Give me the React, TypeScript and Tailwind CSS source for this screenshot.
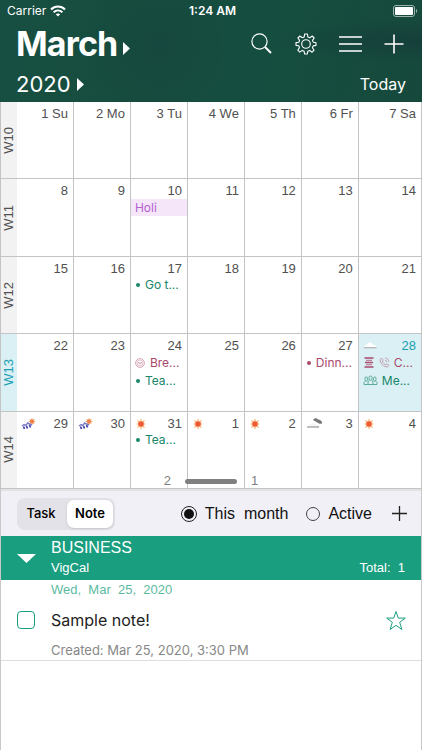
import React, { useState } from 'react';
import clsx from 'clsx';

type Weather = 'sun' | 'rain' | 'cloud' | 'wind';
type EventIcon = 'dot' | 'face' | 'list' | 'phone' | 'people';

interface CalendarEvent {
  title: string;
  icons?: EventIcon[];
  color: 'green' | 'rose' | 'purple';
}

interface Day {
  label: string;
  weather?: Weather;
  events?: CalendarEvent[];
  today?: boolean;
}

interface Week {
  name: string;
  current?: boolean;
  days: Day[];
}

const weeks: Week[] = [
  {
    name: 'W10',
    days: [
      { label: '1 Su' },
      { label: '2 Mo' },
      { label: '3 Tu' },
      { label: '4 We' },
      { label: '5 Th' },
      { label: '6 Fr' },
      { label: '7 Sa' },
    ],
  },
  {
    name: 'W11',
    days: [
      { label: '8' },
      { label: '9' },
      { label: '10', events: [{ title: 'Holi', color: 'purple' }] },
      { label: '11' },
      { label: '12' },
      { label: '13' },
      { label: '14' },
    ],
  },
  {
    name: 'W12',
    days: [
      { label: '15' },
      { label: '16' },
      { label: '17', events: [{ title: 'Go t...', icons: ['dot'], color: 'green' }] },
      { label: '18' },
      { label: '19' },
      { label: '20' },
      { label: '21' },
    ],
  },
  {
    name: 'W13',
    current: true,
    days: [
      { label: '22' },
      { label: '23' },
      {
        label: '24',
        events: [
          { title: 'Bre...', icons: ['face'], color: 'rose' },
          { title: 'Tea...', icons: ['dot'], color: 'green' },
        ],
      },
      { label: '25' },
      { label: '26' },
      { label: '27', events: [{ title: 'Dinn...', icons: ['dot'], color: 'rose' }] },
      {
        label: '28',
        today: true,
        weather: 'cloud',
        events: [
          { title: 'C...', icons: ['list', 'phone'], color: 'rose' },
          { title: 'Me...', icons: ['people'], color: 'green' },
        ],
      },
    ],
  },
  {
    name: 'W14',
    days: [
      { label: '29', weather: 'rain' },
      { label: '30', weather: 'rain' },
      { label: '31', weather: 'sun', events: [{ title: 'Tea...', icons: ['dot'], color: 'green' }] },
      { label: '1', weather: 'sun' },
      { label: '2', weather: 'sun' },
      { label: '3', weather: 'wind' },
      { label: '4', weather: 'sun' },
    ],
  },
];

const eventColors = {
  green: 'text-[#17866a]',
  rose: 'text-[#a8486a]',
  purple: 'bg-[#f6e6fa] text-[#b45fd0]',
};

function WeatherIcon({ type }: { type: Weather }) {
  if (type === 'sun') {
    return (
      <svg width="16" height="12" viewBox="0 0 16 12" aria-hidden="true">
        <path d="M6 1v10M1.5 6h9M2.5 2.5l7 7M9.500 2.500l-7 7" stroke="#f5b56a" strokeWidth="1.200" />
        <circle cx="6" cy="6" r="2.800" fill="#ee5a35" />
      </svg>
    );
  }
  if (type === 'rain') {
    return (
      <svg width="16" height="12" viewBox="0 0 16 12" aria-hidden="true">
        <path d="M11 0v7M7.500 3.500h7M8.500 1l5 5M13.500 1l-5 5" stroke="#f7bd72" />
        <circle cx="11" cy="3.500" r="2.200" fill="#f08050" />
        <path d="M1 8l2-1.500 2 1 1.500-2.500 2 1 2.500 1" stroke="#7b7bc8" strokeWidth="1.400" fill="none" />
        <path d="M2.500 8.500l1 2.500M5.500 8l1 2.500M8.500 7l1 2.500" stroke="#3f3fa8" strokeWidth="1.700" />
      </svg>
    );
  }
  if (type === 'cloud') {
    return (
      <svg width="16" height="12" viewBox="0 0 16 12" aria-hidden="true">
        <path d="M1 7.500C1 5.500 3 5 4 5c.5-3 4-3.500 5.500-.5 2 0 4 1 4 3z" fill="#fff" />
        <path d="M1 7.700h12.500" stroke="#b4b7b7" strokeWidth="1.300" />
      </svg>
    );
  }
  return (
    <svg width="18" height="12" viewBox="0 0 18 12" aria-hidden="true">
      <path d="M7 2C8.500-.2 11 0 12 1.500c2 0 4 1.500 4.200 3.200-.7 1.500-2.200 1.300-3.200.8z" fill="#777" />
      <path d="M2 8.500c0-2 2-2 3-2 1-2 4-1.500 5 .4 2-.4 3 .6 3 1.600z" fill="#f5f5f5" />
      <path d="M1 9h12" stroke="#aaa" strokeWidth="1.500" />
    </svg>
  );
}

function EventGlyph({ icon }: { icon: EventIcon }) {
  switch (icon) {
    case 'dot':
      return <span className="mx-px size-1 shrink-0 rounded-full bg-current" />;
    case 'face':
      return (
        <svg width="11" height="10" viewBox="0 0 11 10" fill="none" stroke="currentColor" strokeWidth="0.600" className="shrink-0 opacity-80">
          <circle cx="5" cy="5" r="4.400" />
          <circle cx="5" cy="5" r="3" strokeWidth="0.400" />
          <path d="M3 4.500h1.500M5.500 4.500H7M3.500 5.800h3" />
        </svg>
      );
    case 'list':
      return (
        <svg width="12" height="11" viewBox="0 0 12 11" fill="none" stroke="currentColor" className="shrink-0">
          <path d="M1.500 1h9M1.500 10h9" strokeWidth="1.400" />
          <path d="M3 3.300h6M3 7.700h6" strokeWidth="0.800" />
          <path d="M2 5.500h8" strokeWidth="1.500" />
        </svg>
      );
    case 'phone':
      return (
        <svg width="11" height="11" viewBox="0 0 11 11" fill="none" stroke="currentColor" strokeWidth="0.700" className="shrink-0 opacity-70">
          <path d="M2.500 1L1 2.500C1 6 4.500 10 8.500 10L10 8.500 8 6.800 6.800 7.800C5 7 4 5.800 3.300 4.200L4.200 3z" />
          <path d="M6 3.200c1 .2 1.600.8 1.800 1.800M6.200 1c2 .2 3.500 1.700 3.700 3.800" />
        </svg>
      );
    case 'people':
      return (
        <svg width="15" height="11" viewBox="0 0 15 11" fill="none" stroke="currentColor" strokeWidth="0.800" className="shrink-0 opacity-80">
          <rect x="6" y="1" width="3" height="4.500" rx="1.500" />
          <rect x="2" y="2" width="2.500" height="4" rx="1.200" />
          <rect x="10.500" y="2" width="2.500" height="4" rx="1.200" />
          <path d="M6 5.500C5 6 5 7 5 9.500h5C10 7 10 6 9 5.500M5 9.500H1V7.500L2.500 6M10 9.500h4V7.500L12.500 6" />
        </svg>
      );
  }
}

function DayCell({ day }: { day: Day }) {
  return (
    <td
      className={clsx(
        'border-r border-b border-[#c4c4c6] p-0 align-top',
        day.today ? 'bg-[#dbf0f4] text-[#1a9fb5]' : 'bg-white text-[#505050]'
      )}
    >
      <div className="flex h-5 items-center justify-between pt-1 pr-[5px] pl-1">
        <span>{day.weather && <WeatherIcon type={day.weather} />}</span>
        <span className="text-[13px] leading-4">{day.label}</span>
      </div>
      {day.events?.map((event) => (
        <div
          key={event.title}
          className={clsx(
            'mb-px flex h-[17px] items-center gap-1 overflow-hidden pl-1 font-[Inter,sans-serif] text-xs whitespace-nowrap',
            eventColors[event.color]
          )}
        >
          {event.icons?.map((icon) => <EventGlyph key={icon} icon={icon} />)}
          <span>{event.title}</span>
        </div>
      ))}
    </td>
  );
}

function StatusBar() {
  return (
    <div className="grid h-[22px] grid-cols-3 items-center pr-1 pl-[7px] text-xs">
      <div className="flex items-center gap-1">
        <span>Carrier</span>
        <svg width="16" height="12" viewBox="0 0 16 12" fill="none" stroke="white" strokeWidth="2" aria-hidden="true">
          <path d="M1 4.500c4-4 10-4 14 0M3.600 7.300c2.600-2.500 6.200-2.500 8.800 0" />
          <path d="M8 11.500L5.800 9.300c1.200-1.200 3.200-1.200 4.400 0z" fill="white" stroke="none" />
        </svg>
      </div>
      <span className="text-center font-semibold">1:24 AM</span>
      <svg width="25" height="12" viewBox="0 0 25 12" className="justify-self-end" aria-hidden="true">
        <rect x="0.500" y="0.500" width="21" height="11" rx="2.500" fill="none" stroke="#9bb5ae" />
        <rect x="2" y="2" width="18" height="8" rx="1" fill="white" />
        <path d="M23 4v4c1.500-.5 1.500-3.500 0-4z" fill="#9bb5ae" />
      </svg>
    </div>
  );
}

function GearIcon() {
  return (
    <svg width="22" height="22" viewBox="0 0 22 22" fill="none" stroke="currentColor" strokeWidth="1.100" strokeLinejoin="round">
      <path d="M9.600 1h2.800l.5 2.900 1.900.8 2.400-1.700 2 2-1.700 2.400.8 1.900 2.700.4v2.700l-2.800.5-.8 1.900 1.700 2.400-2 2-2.400-1.700-1.900.8-.5 2.700H9.600l-.5-2.800-1.900-.8-2.400 1.700-2-2 1.700-2.400-.8-1.900L1 12.400V9.600l2.800-.4.8-1.900L2.900 5l2-2 2.400 1.700 1.900-.8z" />
      <circle cx="11" cy="11" r="4.300" />
    </svg>
  );
}

function Header() {
  return (
    <header className="h-[102px] bg-[#154f42] bg-[radial-gradient(ellipse_at_100%_40%,#163f3b_0%,transparent_25%),radial-gradient(circle_at_38%_45%,#17483f_0%,transparent_30%),linear-gradient(100deg,#174f42,#164d3e_30%,#154e40_60%,#16493c)] font-[Inter,sans-serif] text-white">
      <StatusBar />
      <div className="flex h-11 items-center justify-between pr-[18px] pl-4">
        <button className="flex items-center gap-1.5">
          <span className="text-[34px] leading-10 font-bold tracking-tight">March</span>
          <svg width="7" height="13" viewBox="0 0 7 13" className="mt-2" aria-hidden="true">
            <path d="M0 0l7 6.500L0 13z" fill="white" />
          </svg>
        </button>
        <div className="flex items-center gap-[22px]">
          <button aria-label="Search">
            <svg width="22" height="22" viewBox="0 0 22 22" fill="none" stroke="currentColor">
              <circle cx="8.500" cy="8.500" r="7.600" strokeWidth="1.200" />
              <path d="M14 14l6 6" strokeWidth="2" />
            </svg>
          </button>
          <button aria-label="Settings">
            <GearIcon />
          </button>
          <button aria-label="Menu">
            <svg width="23" height="18" viewBox="0 0 23 18" stroke="currentColor" strokeWidth="1.600">
              <path d="M0 2h23M0 9h23M0 16h23" />
            </svg>
          </button>
          <button aria-label="Add event">
            <svg width="20" height="20" viewBox="0 0 20 20" stroke="currentColor" strokeWidth="1.600">
              <path d="M10 0.500v19M0.500 10h19" />
            </svg>
          </button>
        </div>
      </div>
      <div className="flex h-9 items-center justify-between pr-4 pl-4">
        <button className="flex items-center gap-1.5">
          <span className="text-[22px] leading-7">2020</span>
          <svg width="7" height="13" viewBox="0 0 7 13" aria-hidden="true">
            <path d="M0 0l7 6.500L0 13z" fill="white" />
          </svg>
        </button>
        <button className="text-base">Today</button>
      </div>
    </header>
  );
}

function MonthGrid() {
  return (
    <section className="relative">
      <table className="h-[387px] w-full table-fixed border-separate border-spacing-0">
        <colgroup>
          <col className="w-[17px]" />
          <col className="w-[13.5%]" />
          <col className="w-[13.5%]" />
          <col className="w-[13.5%]" />
          <col className="w-[13.5%]" />
          <col className="w-[13.5%]" />
          <col className="w-[13.5%]" />
          <col />
        </colgroup>
        <tbody>
          {weeks.map((week) => (
            <tr key={week.name} className="h-1/5">
              <th
                scope="row"
                className={clsx(
                  'border-b border-l border-[#c4c4c6] p-0 text-[13px] leading-4 font-normal',
                  week.current ? 'bg-[#dbf0f4] text-[#1a9fb5]' : 'bg-[#f2f2f2] text-[#505050]'
                )}
              >
                <span className="inline-block rotate-180 align-middle [writing-mode:vertical-rl]">{week.name}</span>
              </th>
              {week.days.map((day) => (
                <DayCell key={day.label} day={day} />
              ))}
            </tr>
          ))}
        </tbody>
      </table>
      {/* drag handle over the last week */}
      <div className="absolute inset-x-0 bottom-0 flex h-4 items-center justify-center gap-[14px] text-[13px] text-[#808080]">
        <span>2</span>
        <span className="h-[5px] w-[52px] rounded-full bg-[#808080]" />
        <span>1</span>
      </div>
    </section>
  );
}

function Toolbar() {
  const [tab, setTab] = useState('Note');
  return (
    <div className="flex h-[47px] items-center justify-between border-t-2 border-[#e2e2e5] bg-[#f1f0f6] pr-[14px] pl-4">
      <div className="flex h-8 rounded-lg bg-[#e3e2e8] p-0.5 font-[Inter,sans-serif] text-[13px] text-black">
        {['Task', 'Note'].map((name) => (
          <button
            key={name}
            onClick={() => setTab(name)}
            className={clsx('rounded-[7px]', tab === name ? 'w-[46px] bg-white font-semibold shadow' : 'w-12 pr-1 font-medium')}
          >
            {name}
          </button>
        ))}
      </div>
      <div className="flex items-center text-base text-[#111]">
        <label className="flex items-center gap-2 whitespace-pre">
          <input
            type="radio"
            name="filter"
            defaultChecked
            className="size-4 appearance-none rounded-full border border-[#222] bg-clip-content p-0.5 checked:bg-[#111]"
          />
          {'This  month'}
        </label>
        <label className="ml-[18px] flex items-center gap-2">
          <input
            type="radio"
            name="filter"
            className="size-[14px] appearance-none rounded-full border border-[#444] bg-clip-content p-0.5 checked:bg-[#111]"
          />
          Active
        </label>
        <button aria-label="Add note" className="ml-5">
          <svg width="15" height="15" viewBox="0 0 15 15" stroke="#222" strokeWidth="1.300">
            <path d="M7.500 0v15M0 7.500h15" />
          </svg>
        </button>
      </div>
    </div>
  );
}

function NoteList() {
  return (
    <section className="flex-1">
      <div className="flex h-11 items-center bg-[#1a9e80] pr-4 pl-4 text-white">
        <button aria-label="Collapse" className="w-[34px]">
          <svg width="19" height="9" viewBox="0 0 19 9">
            <path d="M0 0h19L9.500 9z" fill="white" />
          </svg>
        </button>
        <div className="flex-1">
          <h2 className="text-base leading-5">BUSINESS</h2>
          <div className="flex justify-between text-[13px] leading-5">
            <span>VigCal</span>
            <span className="whitespace-pre">{'Total:  1'}</span>
          </div>
        </div>
      </div>
      <div className="border-b border-[#dedede] pr-[15px] pl-4">
        <p className="pl-[34px] text-[13px] leading-5 whitespace-pre text-[#5dbb9f]">{'Wed,  Mar  25,  2020'}</p>
        <div className="flex h-10 items-center justify-between">
          <label className="flex items-center gap-4 font-[Inter,sans-serif] text-base text-[#222]">
            <input
              type="checkbox"
              className="size-[18px] appearance-none rounded border border-[#1a9e80] checked:bg-[#1a9e80]"
            />
            Sample note!
          </label>
          <button aria-label="Favorite">
            <svg width="20" height="22" viewBox="0 0 20 22" fill="none" stroke="#1a9e80" strokeWidth="1">
              <path d="M10 2.500l2.300 6.600h7l-5.600 4.200 2.200 7.200L10 16.300 4.100 20.500l2.200-7.200L.7 9.100h7z" />
            </svg>
          </button>
        </div>
        <p className="pl-[34px] font-[Inter,sans-serif] text-[13px] leading-5 text-[#888]">Created: Mar 25, 2020, 3:30 PM</p>
      </div>
    </section>
  );
}

export default function App() {
  return (
    <div className="flex min-h-screen flex-col bg-white font-['Liberation_Sans',Arial,sans-serif]">
      <Header />
      <main className="flex flex-1 flex-col">
        <MonthGrid />
        <div className="flex flex-1 flex-col border-x border-[#c9c9c9]">
          <Toolbar />
          <NoteList />
        </div>
      </main>
    </div>
  );
}
